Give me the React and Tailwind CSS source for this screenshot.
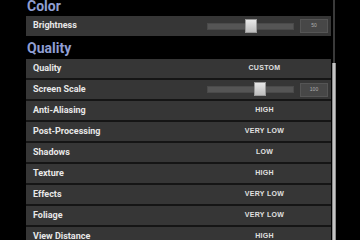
import React from "react";

const rows = [
  { label: "Quality", value: "CUSTOM" },
  { label: "Screen Scale", slider: 46, num: "100" },
  { label: "Anti-Aliasing", value: "HIGH" },
  { label: "Post-Processing", value: "VERY LOW" },
  { label: "Shadows", value: "LOW" },
  { label: "Texture", value: "HIGH" },
  { label: "Effects", value: "VERY LOW" },
  { label: "Foliage", value: "VERY LOW" },
  { label: "View Distance", value: "HIGH" },
];

function Slider({ pos, num }) {
  return (
    <div className="flex items-center h-full">
      <div className="relative ml-[9px] w-[87px] h-[7px] bg-[#555555] border border-[#4a4a4a]">
        <div
          className="absolute top-[-5px] w-[12px] h-[14px] bg-gradient-to-b from-[#e8e8e8] to-[#bdbdbd] border border-[#9a9a9a]"
          style={{ left: pos }}
        />
      </div>
      <div className="ml-[6px] w-[28px] h-[14px] bg-[#474747] border border-[#555555] flex items-center justify-center text-[5px] text-[#b0b0b0] font-['Liberation_Sans',sans-serif]">
        {num}
      </div>
    </div>
  );
}

function Row({ label, value, slider, num }) {
  return (
    <div className="flex h-[19px] bg-[#363636] border-b-2 border-[#151515] box-content">
      <div className="w-[172px] pl-[7px] flex items-center text-[9px] font-bold text-[#e8e8e8]">
        {label}
      </div>
      <div className="flex-1">
        {slider !== undefined ? (
          <Slider pos={slider} num={num} />
        ) : (
          <div className="h-full flex items-center justify-center text-[7px] font-bold tracking-[0.3px] text-[#e0e0e0] font-['Liberation_Sans',sans-serif]">
            {value}
          </div>
        )}
      </div>
    </div>
  );
}

function Header({ children, first }) {
  return (
    <div
      className={
        first
          ? "h-[23px] pt-[3px] pl-[1px] text-[14px] leading-[20px] font-bold text-[#909fd3]"
          : "h-[23px] pt-[2px] pl-[1px] text-[14px] leading-[20px] font-bold text-[#909fd3]"
      }
    >
      {children}
    </div>
  );
}

export default function App() {
  return (
    <div className="w-[360px] h-[240px] overflow-hidden bg-black flex items-start font-['Roboto',sans-serif]">
      <div className="ml-[26px] w-[305px] -mt-[7px] shrink-0">
        <Header first>Color</Header>
        <div className="flex h-[20px] bg-[#363636]">
          <div className="w-[172px] pl-[7px] flex items-center text-[9px] font-bold text-[#e8e8e8]">
            Brightness
          </div>
          <div className="flex-1">
            <Slider pos={37} num="50" />
          </div>
        </div>
        <Header>Quality</Header>
        <div>
          {rows.map((r) => (
            <Row key={r.label} {...r} />
          ))}
        </div>
      </div>
      <div className="ml-[1px] w-[4px] h-[240px] flex flex-col items-center">
        <div className="w-[2px] h-[63px] bg-[#3a3a3a]" />
        <div className="w-[4px] flex-1 bg-[#c4c4c4] border-x border-[#8a8a8a]" />
      </div>
    </div>
  );
}
